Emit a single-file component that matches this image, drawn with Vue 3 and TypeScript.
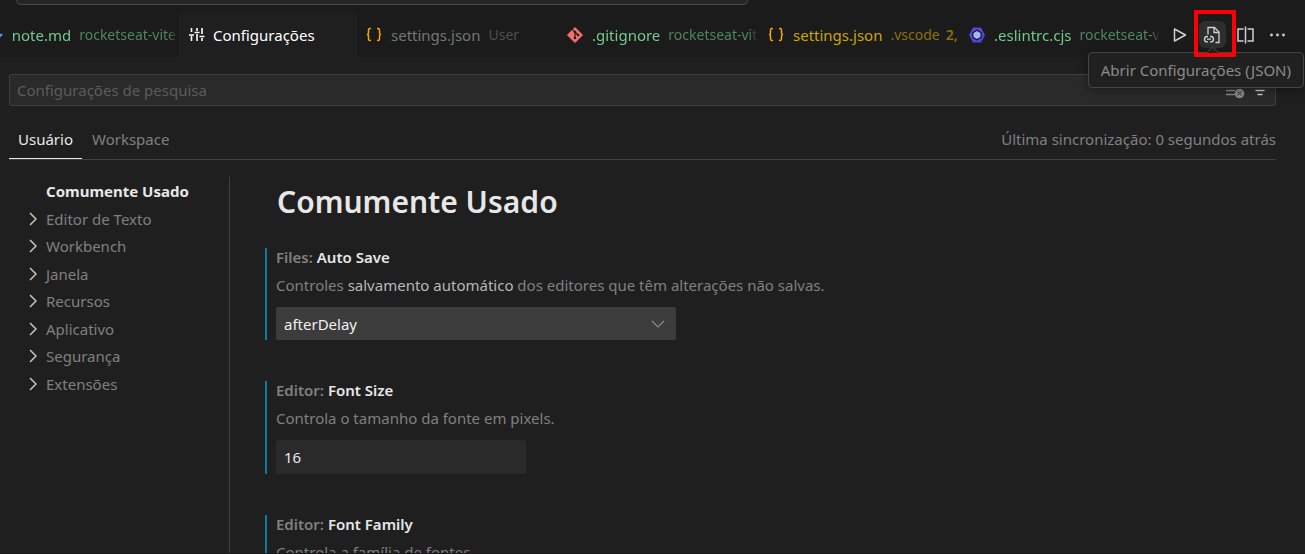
<script setup lang="ts">
import { ref } from 'vue'

interface EditorTab {
  icon: 'markdown' | 'sliders' | 'json' | 'git' | 'eslint'
  name: string
  folder: string
  problems?: string
  tone: 'added' | 'active' | 'plain' | 'warning'
  faded?: boolean
}

const tabs: EditorTab[] = [
  { icon: 'markdown', name: 'note.md', folder: 'rocketseat-vite', tone: 'added', faded: true },
  { icon: 'sliders', name: 'Configurações', folder: '', tone: 'active' },
  { icon: 'json', name: 'settings.json', folder: 'User', tone: 'plain' },
  { icon: 'git', name: '.gitignore', folder: 'rocketseat-vite', tone: 'added', faded: true },
  { icon: 'json', name: 'settings.json', folder: '.vscode', problems: '2,', tone: 'warning' },
  { icon: 'eslint', name: '.eslintrc.cjs', folder: 'rocketseat-vite', tone: 'added', faded: true },
]

const groups: string[] = [
  'Editor de Texto',
  'Workbench',
  'Janela',
  'Recursos',
  'Aplicativo',
  'Segurança',
  'Extensões',
]

const search = ref('')
const autoSave = ref('afterDelay')
const fontSize = ref('16')
</script>

<template>
  <div class="window">
    <div class="title-bar"><div class="command-center"></div></div>

    <header class="tab-bar">
      <nav class="tabs" aria-label="Editores abertos">
        <a v-for="(tab, i) in tabs" :key="i" href="#" class="tab" :class="[tab.tone, tab.icon, { faded: tab.faded }]">
          <svg v-if="tab.icon === 'markdown'" class="file-icon" viewBox="0 0 16 16"><path d="M11 4v7M8 8l3 3 4-4" stroke="#5a9bea" stroke-width="2" fill="none" /></svg>
          <svg v-else-if="tab.icon === 'sliders'" class="file-icon" viewBox="0 0 16 16">
            <path d="M2.5 1v4M2.5 9v5M8 1v3M8 7v7M13 1v6M13 11v3M0 8h5M5.500 5.500h5M10.500 9.500h5" stroke="#fff" stroke-width="1.600" fill="none" />
          </svg>
          <svg v-else-if="tab.icon === 'json'" class="file-icon" viewBox="0 0 16 16">
            <path d="M5 1.500H4Q2.500 1.500 2.500 3v2.500Q2.500 7.500 1 7.500 2.500 7.500 2.500 9.500V12q0 1.500 1.500 1.500h1M11 1.500h1q1.500 0 1.500 1.500v2.500q0 2 1.500 2-1.500 0-1.500 2V12q0 1.500-1.500 1.500h-1" stroke="#f5a311" stroke-width="1.500" fill="none" />
          </svg>
          <svg v-else-if="tab.icon === 'git'" class="file-icon" viewBox="0 0 16 16">
            <path d="M8 .5 15.500 8 8 15.500.5 8Z" fill="#f87171" stroke="#f87171" stroke-linejoin="round" />
            <path d="M5.500 2.500 8 5v6M8 5l3 3" stroke="#1b1b1b" stroke-width="1.200" fill="none" />
            <circle cx="8" cy="5" r="1.300" fill="#1b1b1b" /><circle cx="8" cy="11" r="1.300" fill="#1b1b1b" /><circle cx="11" cy="8" r="1.300" fill="#1b1b1b" />
          </svg>
          <svg v-else class="file-icon" viewBox="0 0 16 16">
            <path d="M4 .5h8L16 8l-4 7.500H4L0 8Z" fill="#4f46e5" />
            <path d="M8 2.500 12.800 5.300v5.400L8 13.500l-4.800-2.800V5.300Z" fill="#1b1b1b" />
            <path d="M8 4 11.500 6v4L8 12l-3.500-2V6Z" fill="#a5b4fc" />
          </svg>
          <span class="file-name">{{ tab.name }}</span>
          <span v-if="tab.folder" class="folder">{{ tab.folder }}</span>
          <span v-if="tab.problems" class="problems">{{ tab.problems }}</span>
        </a>
      </nav>

      <div class="actions">
        <button type="button" class="action" aria-label="Executar">
          <svg viewBox="0 0 20 20"><path d="M4.500 4v12L15.500 10Z" stroke="currentColor" stroke-width="1.500" fill="none" stroke-linejoin="round" /></svg>
        </button>
        <div class="highlighted">
          <button type="button" class="action hovered" aria-describedby="open-json-tip" aria-label="Abrir Configurações (JSON)">
            <svg viewBox="0 0 20 20">
              <path d="M5 9.500V2.500h6.500L16 7v10.500H12.500M11 2.500V7.500h5" stroke="currentColor" stroke-width="1.300" fill="none" />
              <path d="M5 11.500H4.200a2.700 2.700 0 0 0 0 5.400H5M7 11.500h.8a2.700 2.700 0 0 1 0 5.400H7M4 14.200h4" stroke="currentColor" stroke-width="1.300" fill="none" />
            </svg>
          </button>
          <div id="open-json-tip" class="tooltip" role="tooltip">Abrir Configurações (JSON)</div>
          <div class="red-frame"></div>
        </div>
        <button type="button" class="action" aria-label="Dividir editor">
          <svg viewBox="0 0 20 20"><path d="M7.500 4H2v12h5.500M11.500 4H17v12h-5.500M9.500 1.500v17" stroke="currentColor" stroke-width="1.500" fill="none" /></svg>
        </button>
        <button type="button" class="action" aria-label="Mais ações">
          <svg viewBox="0 0 20 20" fill="currentColor"><circle cx="2.500" cy="10" r="1.400" /><circle cx="8.500" cy="10" r="1.400" /><circle cx="14.500" cy="10" r="1.400" /></svg>
        </button>
      </div>
    </header>

    <main class="settings">
      <div class="search">
        <input v-model="search" type="text" aria-label="Configurações de pesquisa" placeholder="Configurações de pesquisa" />
        <button type="button" class="search-tool muted" aria-label="Limpar pesquisa">
          <svg viewBox="0 0 20 20">
            <path d="M1 6.500h17M1 10.500h9M1 14.500h9" stroke="currentColor" stroke-width="1.400" />
            <circle cx="14.500" cy="13.500" r="4.800" fill="currentColor" />
            <path d="M12.700 11.700l3.600 3.600m0-3.600-3.600 3.600" stroke="#2a2a2a" stroke-width="1" />
          </svg>
        </button>
        <button type="button" class="search-tool" aria-label="Filtrar">
          <svg viewBox="0 0 20 20"><path d="M3 6h14M5.500 10.500h9M7.500 14.500h5" stroke="currentColor" stroke-width="1.600" /></svg>
        </button>
      </div>

      <div class="scope-row">
        <a href="#" class="scope current">Usuário</a>
        <a href="#" class="scope">Workspace</a>
        <span class="sync">Última sincronização: 0 segundos atrás</span>
      </div>

      <div class="body">
        <nav class="toc" aria-label="Categorias">
          <a href="#" class="toc-item selected">Comumente Usado</a>
          <a v-for="group in groups" :key="group" href="#" class="toc-item">
            <svg class="chevron" viewBox="0 0 8 14"><path d="M1 1l6 6-6 6" stroke="#c5c5c5" stroke-width="1.500" fill="none" /></svg>
            {{ group }}
          </a>
        </nav>

        <div class="content">
          <h1>Comumente Usado</h1>

          <section class="setting">
            <label class="setting-title" for="auto-save"><span>Files:</span> Auto Save</label>
            <p>Controles <a href="#">salvamento automático</a> dos editores que têm alterações não salvas.</p>
            <div class="select-box">
              <select id="auto-save" v-model="autoSave">
                <option>off</option>
                <option>afterDelay</option>
                <option>onFocusChange</option>
                <option>onWindowChange</option>
              </select>
              <svg viewBox="0 0 14 8"><path d="M1 1l6 6 6-6" stroke="#8c8c8c" stroke-width="1.200" fill="none" /></svg>
            </div>
          </section>

          <section class="setting">
            <label class="setting-title" for="font-size"><span>Editor:</span> Font Size</label>
            <p>Controla o tamanho da fonte em pixels.</p>
            <input id="font-size" v-model="fontSize" class="number-box" type="text" />
          </section>

          <section class="setting">
            <h2 class="setting-title"><span>Editor:</span> Font Family</h2>
            <p>Controla a família de fontes.</p>
          </section>
        </div>
      </div>
    </main>
  </div>
</template>

<style>
body {
  background: #1f1f1f;
}
</style>

<style scoped>
* {
  box-sizing: border-box;
}

.window {
  display: flex;
  flex-direction: column;
  height: 100vh;
  overflow: hidden;
  border-bottom: 1px solid #1a181c;
  background: #1f1f1f;
  color: #808080;
  font: 15px/20px "Noto Sans", "Open Sans", sans-serif;
}

a {
  color: inherit;
  text-decoration: none;
}

button,
input,
select {
  margin: 0;
  border: 0;
  padding: 0;
  background: none;
  color: inherit;
  font: inherit;
}

.title-bar {
  flex: none;
  height: 13px;
  padding-left: 16px;
  background: #1b1b1b;
}

.command-center {
  width: 732px;
  height: 5px;
  border: 1px solid #4a4a4a;
  border-top: 0;
  border-radius: 0 0 8px 8px;
  background: #252525;
}

.tab-bar {
  display: flex;
  flex: none;
  height: 44px;
  background: #1b1b1b;
}

.tabs {
  display: flex;
  flex: 1;
  min-width: 0;
  overflow: hidden;
}

.tab {
  display: flex;
  flex: 0 0 201px;
  align-items: center;
  padding-left: 9px;
  overflow: hidden;
  white-space: nowrap;
}

.tab.markdown {
  flex-basis: 179px;
  justify-content: flex-end;
  padding: 0 3px 0 0;
}

.tab.sliders {
  flex-basis: 178px;
}

.file-icon {
  flex: none;
  width: 16px;
  height: 16px;
  margin-right: 9px;
}

.sliders .file-icon {
  margin: 0 8px 0 1px;
}

.folder,
.problems {
  margin-left: 8px;
  font-size: 14px;
}

.problems {
  margin-left: 6px;
  font-weight: 600;
}

.added {
  color: #73c991;
}

.added .folder {
  color: #4f8563;
}

.active {
  background: #1f1f1f;
  color: #fff;
}

.plain {
  color: #767676;
}

.plain .folder {
  color: #4f4f4f;
}

.warning {
  color: #cca700;
}

.warning .folder,
.warning .problems {
  color: #8a7208;
}

.faded {
  mask-image: linear-gradient(to left, transparent 1px, #000 10px);
}

.actions {
  display: flex;
  flex: none;
  align-items: flex-start;
  gap: 6px;
  padding: 8px 13px 0 0;
}

.action {
  display: flex;
  align-items: center;
  justify-content: center;
  width: 27px;
  height: 27px;
  border-radius: 6px;
  color: #d0d0d0;
}

.action svg {
  width: 20px;
  height: 20px;
}

.hovered {
  background: #2d2f2f;
}

.highlighted {
  position: relative;
  z-index: 1;
}

.red-frame {
  position: absolute;
  inset: -11px -10px -9px -5px;
  border: 4px solid #fb0007;
  border-radius: 1px;
  pointer-events: none;
}

.tooltip {
  position: absolute;
  top: 31px;
  right: -78px;
  padding: 7px 12px;
  border: 1px solid #454545;
  border-radius: 4px;
  background: #202020;
  box-shadow: 0 2px 8px rgba(0, 0, 0, 0.36);
  color: #8b8b8b;
  white-space: nowrap;
}

.tooltip::before {
  content: "";
  position: absolute;
  top: -5px;
  right: 86px;
  width: 8px;
  height: 8px;
  border: 1px solid #454545;
  border-width: 1px 0 0 1px;
  background: #202020;
  transform: rotate(45deg);
}

.settings {
  display: flex;
  flex: 1;
  flex-direction: column;
  min-height: 0;
  padding: 17px 29px 0 9px;
}

.search {
  display: flex;
  flex: none;
  align-items: center;
  height: 32px;
  padding: 0 5px 0 7px;
  border: 1px solid #3e3e3e;
  border-radius: 2px;
  background: #2a2a2a;
}

.search input {
  flex: 1;
  min-width: 0;
  outline: 0;
}

.search input::placeholder {
  color: #5c5c5c;
  opacity: 1;
}

.search-tool {
  display: flex;
  width: 20px;
  height: 20px;
  margin-left: 5px;
  color: #c8c8c8;
}

.search-tool.muted {
  color: #858585;
}

.search-tool svg {
  width: 100%;
}

.scope-row {
  display: flex;
  flex: none;
  height: 54px;
  padding-top: 13px;
  border-bottom: 1px solid #414141;
}

.scope {
  height: 40px;
  padding: 10px;
}

.scope.current {
  padding: 10px 9px;
  border-bottom: 1px solid #e7e7e7;
  color: #e7e7e7;
}

.sync {
  margin-left: auto;
  padding-top: 10px;
}

.body {
  display: flex;
  flex: 1;
  min-height: 0;
  padding-top: 17px;
}

.toc {
  display: flex;
  flex: none;
  flex-direction: column;
  width: 221px;
  border-right: 1px solid #414141;
}

.toc-item {
  display: flex;
  align-items: center;
  gap: 9px;
  height: 27px;
  padding-left: 20px;
}

.toc-item:nth-child(odd) {
  height: 28px;
}

.toc-item.selected {
  padding-left: 37px;
  color: #e7e7e7;
  font-weight: 700;
}

.chevron {
  width: 8px;
  height: 14px;
}

.content {
  flex: 1;
  min-width: 0;
  padding-left: 35px;
  overflow: hidden;
}

h1 {
  margin: 0 0 25px 12px;
  padding-top: 4px;
  color: #e7e7e7;
  font-size: 30px;
  font-weight: 600;
  line-height: 42px;
}

.setting {
  margin-bottom: 41px;
  padding-left: 9px;
  border-left: 2px solid #0c7d9d;
}

.setting-title {
  display: block;
  margin: 0;
  color: #e7e7e7;
  font-size: 15px;
  font-weight: 600;
  line-height: 18px;
}

.setting-title span {
  color: #808080;
}

.setting p {
  margin: 9px 0 12px;
}

.setting p a {
  color: #b8b8b8;
}

.select-box {
  display: flex;
  align-items: center;
  width: 400px;
  max-width: 100%;
  height: 33px;
  padding-right: 11px;
  border-radius: 2px;
  background: #3c3c3c;
}

.select-box select {
  flex: 1;
  align-self: stretch;
  margin-right: -14px;
  padding-left: 8px;
  color: #f0f0f0;
  appearance: none;
}

.select-box svg {
  flex: none;
  width: 14px;
  height: 8px;
  pointer-events: none;
}

.number-box {
  display: block;
  width: 250px;
  height: 34px;
  padding-left: 8px;
  border-radius: 2px;
  background: #2a2a2a;
  color: #e7e7e7;
}
</style>
